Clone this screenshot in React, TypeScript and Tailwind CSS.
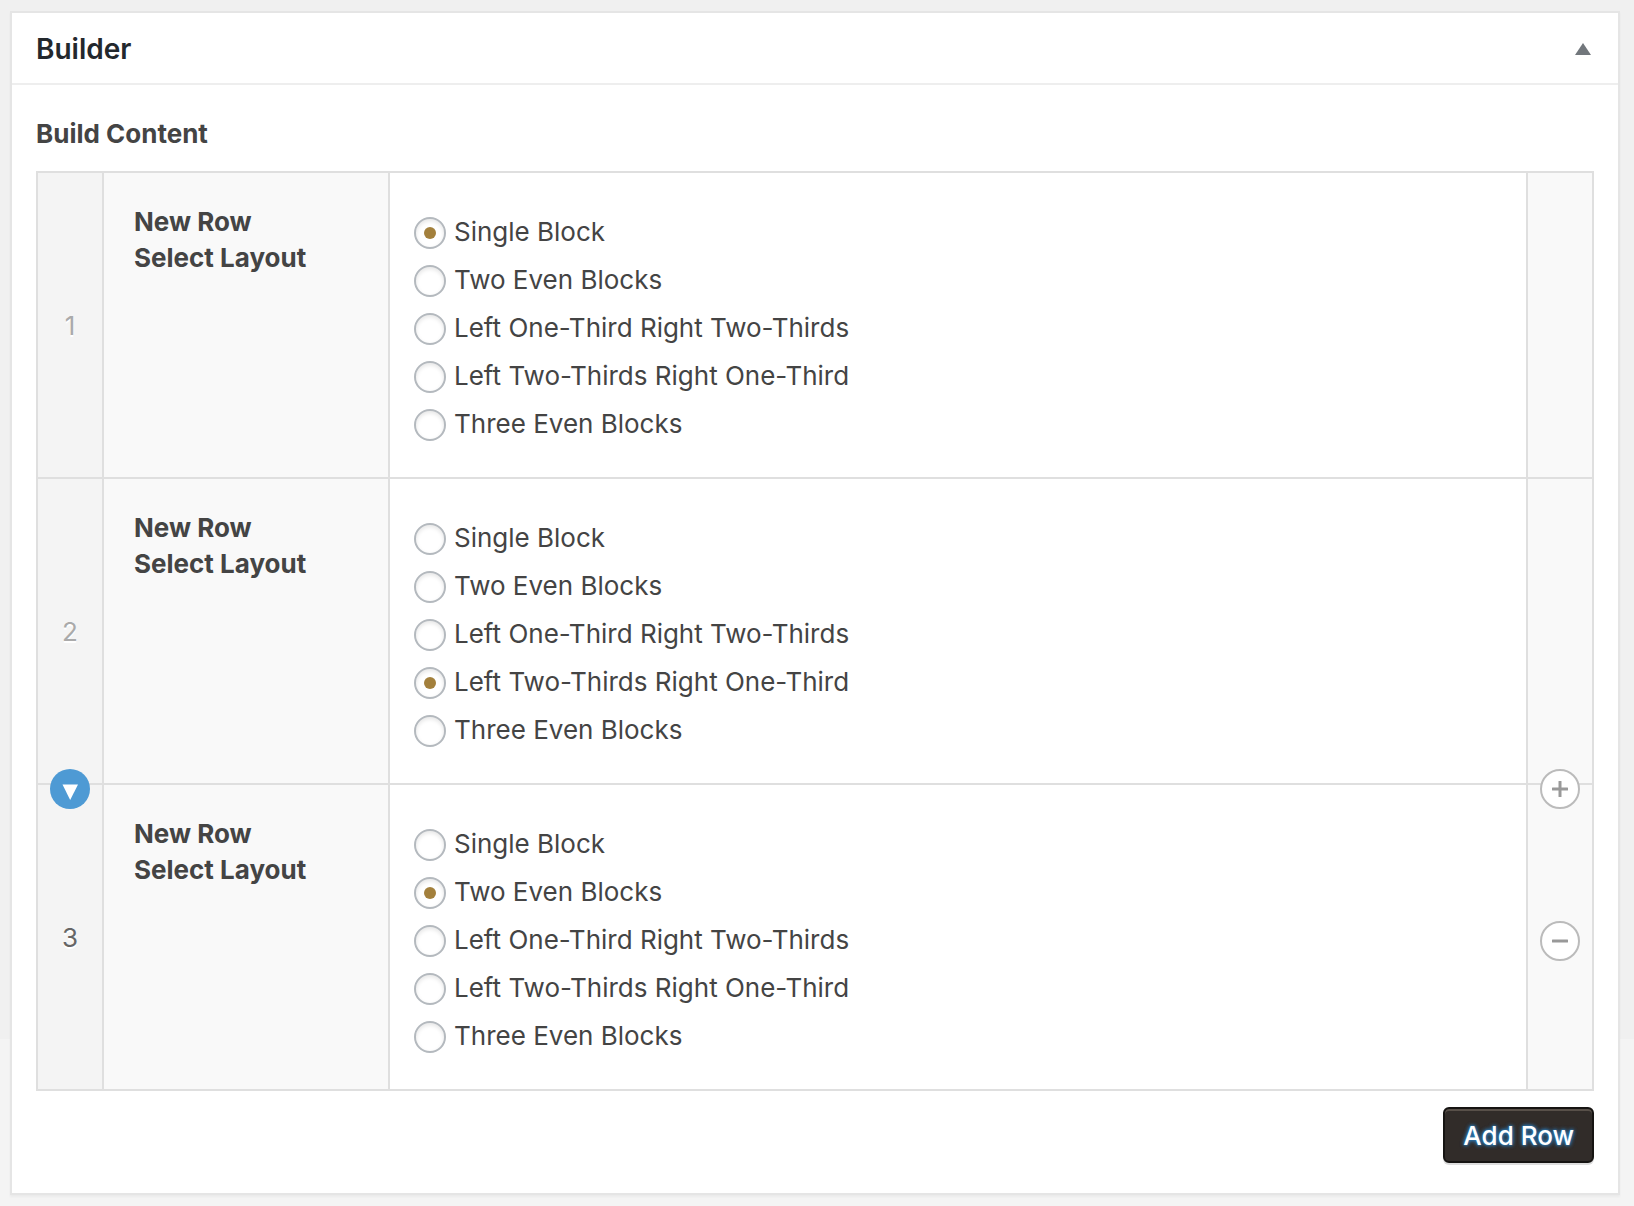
import { useState } from "react";

const LAYOUTS = [
  "Single Block",
  "Two Even Blocks",
  "Left One-Third Right Two-Thirds",
  "Left Two-Thirds Right One-Third",
  "Three Even Blocks",
];

type Row = { id: number; layout: string };

const INITIAL_ROWS: Row[] = [
  { id: 1, layout: "Single Block" },
  { id: 2, layout: "Left Two-Thirds Right One-Third" },
  { id: 3, layout: "Two Even Blocks" },
];

function LayoutOptions({ row, onChange }: { row: Row; onChange: (layout: string) => void }) {
  return (
    <div role="radiogroup" aria-labelledby={`row-${row.id}-label`} className="flex flex-col items-start">
      {LAYOUTS.map((layout) => (
        <label key={layout} className="flex h-12 items-center gap-2">
          <input
            type="radio"
            name={`row-${row.id}-layout`}
            value={layout}
            checked={row.layout === layout}
            onChange={() => onChange(layout)}
            className="grid h-8 w-8 shrink-0 appearance-none place-items-center rounded-full border-2 border-[#b4b9be] bg-white shadow-[inset_0_2px_4px_rgba(0,0,0,0.1)] before:h-3 before:w-3 before:rounded-full checked:before:bg-[#a3803c]"
          />
          <span className="pb-0.5">{layout}</span>
        </label>
      ))}
    </div>
  );
}

export default function App() {
  const [rows, setRows] = useState<Row[]>(INITIAL_ROWS);
  const [active, setActive] = useState(3);
  const [open, setOpen] = useState(true);

  const addRow = () => {
    setRows((prev) => [...prev, { id: Math.max(0, ...prev.map((r) => r.id)) + 1, layout: LAYOUTS[0] }]);
  };

  const removeRow = (id: number) => {
    setRows((prev) => prev.filter((r) => r.id !== id));
  };

  const setLayout = (id: number, layout: string) => {
    setRows((prev) => prev.map((r) => (r.id === id ? { ...r, layout } : r)));
  };

  return (
    <div className="min-h-screen bg-[linear-gradient(#f0f0f0_1039px,#f4f4f4_1039px)] pt-[11px] pr-[14px] pb-[11px] pl-[10px] font-['Inter',sans-serif] text-[26px] leading-9 text-[#444]">
      <section className="border-2 border-[#e5e5e5] bg-white shadow-[0_2px_2px_rgba(0,0,0,0.04)]">
        <header className="flex h-[72px] items-center justify-between border-b-2 border-[#eee] pt-0.5 pr-[27px] pl-6">
          <h2 className="text-[28px] font-semibold text-[#23282d]">Builder</h2>
          <button type="button" aria-label="Toggle panel" aria-expanded={open} onClick={() => setOpen(!open)}>
            <svg width="16" height="12" viewBox="0 0 16 12" fill="#72777c" className={open ? "" : "rotate-180"}>
              <path d="M8 0 16 12H0z" />
            </svg>
          </button>
        </header>

        {open && (
          <div className="px-6 pt-[31px] pb-[30px]">
            <h3 className="mb-[19px] font-bold">Build Content</h3>

            <table className="w-full border-separate border-spacing-0 border-2 border-[#dfdfdf]">
              <tbody>
                {rows.map((row, i) => {
                  const isActive = row.id === active;
                  const line = i < rows.length - 1 ? "border-b-2" : "";
                  return (
                    <tr key={row.id} onMouseEnter={() => setActive(row.id)}>
                      <td className={`relative w-[66px] border-r-2 border-[#dfdfdf] bg-[#f4f4f4] px-0 pt-0.5 pb-0 text-center ${line}`}>
                        {isActive && (
                          <button
                            type="button"
                            aria-label="Collapse row"
                            className="absolute -top-4 left-3 grid h-10 w-10 place-items-center rounded-full bg-[#4e9ad4]"
                          >
                            <svg width="40" height="40" viewBox="0 0 40 40" fill="#fff">
                              <path d="M12.5 15.5h15.5L20.2 31z" />
                            </svg>
                          </button>
                        )}
                        <span className={`[text-shadow:0_2px_0_#fff] ${isActive ? "text-[#666]" : "text-[#aaa]"}`}>{i + 1}</span>
                      </td>
                      <th
                        id={`row-${row.id}-label`}
                        scope="row"
                        className={`w-[286px] border-r-2 border-[#dfdfdf] bg-[#f9f9f9] pt-[31px] pl-[30px] text-left align-top font-bold ${line}`}
                      >
                        New Row
                        <br />
                        Select Layout
                      </th>
                      <td className={`border-r-2 border-[#dfdfdf] bg-white px-6 pt-9 pb-7 ${line}`}>
                        <LayoutOptions row={row} onChange={(layout) => setLayout(row.id, layout)} />
                      </td>
                      <td className={`relative w-16 border-[#dfdfdf] bg-[#f9f9f9] p-0 ${line}`}>
                        {isActive && (
                          <>
                            <button
                              type="button"
                              aria-label="Add row above"
                              onClick={addRow}
                              className="absolute -top-4 left-3 grid h-10 w-10 place-items-center rounded-full border-2 border-[#bbb] bg-white"
                            >
                              <svg width="16" height="16" viewBox="0 0 16 16" fill="#999">
                                <rect y="6.5" width="16" height="3" rx="0.5" />
                                <rect x="6.5" width="3" height="16" rx="0.5" />
                              </svg>
                            </button>
                            <button
                              type="button"
                              aria-label="Remove row"
                              onClick={() => removeRow(row.id)}
                              className="absolute top-[136px] left-3 grid h-10 w-10 place-items-center rounded-full border-2 border-[#bbb] bg-white"
                            >
                              <svg width="16" height="16" viewBox="0 0 16 16" fill="#999">
                                <rect y="6.5" width="16" height="3" rx="0.5" />
                              </svg>
                            </button>
                          </>
                        )}
                      </td>
                    </tr>
                  );
                })}
              </tbody>
            </table>

            <div className="mt-4 flex justify-end">
              <button
                type="button"
                onClick={addRow}
                className="h-14 rounded-md border-2 border-[#161412] bg-[#312c29] px-[18px] pt-0.5 font-medium text-white shadow-[inset_0_2px_0_#585049,0_2px_0_#ddd] [text-shadow:0_0_4px_#2b7ab8,0_0_4px_#2b7ab8,0_0_2px_#2b7ab8]"
              >
                Add Row
              </button>
            </div>
          </div>
        )}
      </section>
    </div>
  );
}
